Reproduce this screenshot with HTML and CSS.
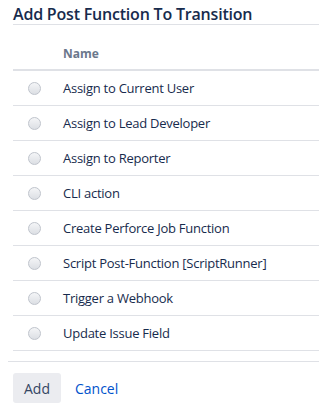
FILE: index.html
```html
<!DOCTYPE html>
<html>
<head>
<meta charset="utf-8">
<link rel="stylesheet" href="styles.css">
</head>
<body>
<div class="dialog">
  <div class="content">
    <h2 class="title">Add Post Function To Transition</h2>
    <div class="table">
      <div class="row head"><span class="cell-radio"></span><span class="cell-name">Name</span></div>
      <label class="row"><span class="cell-radio"><span class="radio"></span></span><span class="cell-name">Assign to Current User</span></label>
      <label class="row"><span class="cell-radio"><span class="radio"></span></span><span class="cell-name">Assign to Lead Developer</span></label>
      <label class="row"><span class="cell-radio"><span class="radio"></span></span><span class="cell-name">Assign to Reporter</span></label>
      <label class="row"><span class="cell-radio"><span class="radio"></span></span><span class="cell-name">CLI action</span></label>
      <label class="row"><span class="cell-radio"><span class="radio"></span></span><span class="cell-name">Create Perforce Job Function</span></label>
      <label class="row"><span class="cell-radio"><span class="radio"></span></span><span class="cell-name">Script Post-Function [ScriptRunner]</span></label>
      <label class="row"><span class="cell-radio"><span class="radio"></span></span><span class="cell-name">Trigger a Webhook</span></label>
      <label class="row"><span class="cell-radio"><span class="radio"></span></span><span class="cell-name">Update Issue Field</span></label>
    </div>
  </div>
  <div class="footer">
    <button class="btn">Add</button>
    <a class="cancel" href="#">Cancel</a>
  </div>
</div>
</body>
</html>
```
FILE: styles.css
```css
html, body {
  margin: 0;
  padding: 0;
  background: #fff;
}
body {
  font-family: "Open Sans", "Noto Sans", sans-serif;
  color: #172b4d;
  overflow: hidden;
}
.dialog {
  padding-left: 8px;
}
.content {
  padding-left: 5px;
}
.title {
  margin: 0;
  padding-top: 4px;
  font-size: 16px;
  line-height: 20px;
  font-weight: 600;
  letter-spacing: -0.2px;
  color: #172b4d;
  border-bottom: 1px solid #dfe1e6;
}
.table {
  display: flex;
  flex-direction: column;
}
.row {
  display: grid;
  grid-template-columns: 50px 1fr;
  align-items: center;
  border-bottom: 1px solid #dfe1e6;
  height: 34px;
  font-size: 13px;
  letter-spacing: -0.25px;
}
.row.head {
  height: 44px;
  align-items: end;
  border-bottom: 2px solid #dfe1e6;
  font-size: 12px;
  font-weight: 700;
  letter-spacing: 0;
  color: #6b778c;
}
.row.head .cell-name {
  line-height: 16px;
  padding-bottom: 7px;
}
.cell-radio {
  display: flex;
  align-items: center;
  padding-left: 15px;
}
.radio {
  width: 11px;
  height: 11px;
  border-radius: 50%;
  border: 1px solid #bfc4cc;
  background: linear-gradient(#f4f5f7, #dcdfe4);
}
.footer {
  margin-top: 10px;
  border-top: 1px solid #dfe1e6;
  padding: 11px 0 0 5px;
  display: flex;
  align-items: center;
  gap: 14px;
}
.btn {
  font-family: inherit;
  font-size: 14px;
  height: 30px;
  padding: 0 11px;
  border: 0;
  border-radius: 3px;
  background: #ebecf0;
  color: #344563;
}
.cancel {
  font-size: 14px;
  color: #0052cc;
  text-decoration: none;
}
```
